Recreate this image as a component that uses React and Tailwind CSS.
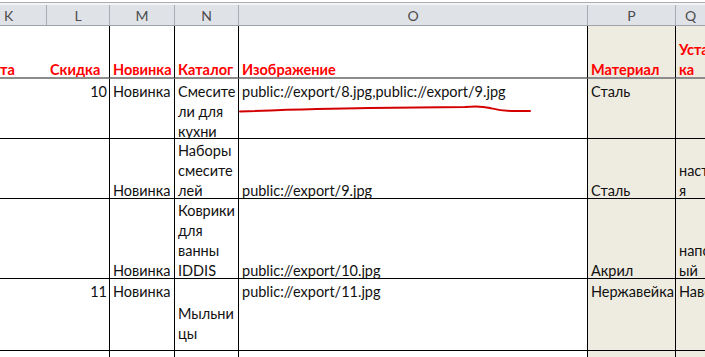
import React from 'react';

const COLS = [
  { key: 'K', w: 47 },
  { key: 'L', w: 63 },
  { key: 'M', w: 65 },
  { key: 'N', w: 64 },
  { key: 'O', w: 349 },
  { key: 'P', w: 88, tan: true },
  { key: 'Q', w: 29, tan: true },
];

// each row: height + cells in column order; a cell is { lines, align, valign }
const ROWS = [
  {
    h: 53,
    head: true,
    cells: [
      { lines: ['та'], valign: 'bottom', flush: true },
      { lines: ['Скидка'], valign: 'bottom' },
      { lines: ['Новинка'], valign: 'bottom' },
      { lines: ['Каталог'], valign: 'bottom' },
      { lines: ['Изображение'], valign: 'bottom' },
      { lines: ['Материал'], valign: 'bottom' },
      { lines: ['Уста', 'ка'], valign: 'bottom' },
    ],
  },
  {
    h: 60,
    cells: [
      null,
      { lines: ['10'], align: 'right' },
      { lines: ['Новинка'] },
      { lines: ['Смесите', 'ли для', 'кухни'] },
      { lines: ['public://export/8.jpg,public://export/9.jpg'], mark: true },
      { lines: ['Сталь'] },
      null,
    ],
  },
  {
    h: 60,
    cells: [
      null,
      null,
      { lines: ['Новинка'], valign: 'bottom' },
      { lines: ['Наборы', 'смесите', 'лей'], valign: 'bottom' },
      { lines: ['public://export/9.jpg'], valign: 'bottom' },
      { lines: ['Сталь'], valign: 'bottom' },
      { lines: ['наст', 'я'], valign: 'bottom' },
    ],
  },
  {
    h: 80,
    cells: [
      null,
      null,
      { lines: ['Новинка'], valign: 'bottom' },
      { lines: ['Коврики', 'для', 'ванны', 'IDDIS'], valign: 'bottom' },
      { lines: ['public://export/10.jpg'], valign: 'bottom' },
      { lines: ['Акрил'], valign: 'bottom' },
      { lines: ['напо', 'ый'], valign: 'bottom' },
    ],
  },
  {
    h: 72,
    cells: [
      null,
      { lines: ['11'], align: 'right' },
      { lines: ['Новинка'] },
      { lines: ['Мыльни', 'цы'], valign: 'middle' },
      { lines: ['public://export/11.jpg'] },
      { lines: ['Нержавейка'] },
      { lines: ['Наве'] },
    ],
  },
  { h: 20, cells: [null, null, null, null, null, null, null] },
];

const VALIGN = {
  top: 'justify-start pt-[3px]',
  bottom: 'justify-end',
  middle: 'justify-start pt-[25px]',
};

// red pen stroke under the first image path
const Scribble = () => (
  <svg
    className="absolute left-0 top-[24px] pointer-events-none"
    width="300"
    height="14"
    viewBox="0 0 300 14"
  >
    <path
      d="M1 8.5 C 40 7, 80 5.5, 130 5 S 205 4.5, 226 4 C 236 3, 243 3, 251 5 S 262 8, 276 8 L 291 8"
      fill="none"
      stroke="#d40000"
      strokeWidth="2"
      strokeLinecap="round"
    />
  </svg>
);

const Cell = ({ col, row, cell, last }) => {
  const bg = col.tan ? 'bg-[#eeece1]' : 'bg-white';
  const border = row.head ? 'border-b-2 border-b-[#8c8c8c]' : 'border-b border-b-black';
  const vline = col.key === 'K' || last ? '' : 'border-r border-r-black';
  const drop = cell && cell.valign === 'bottom' ? 'relative top-[3px]' : '';
  const pad = cell && cell.flush ? 'pl-0' : 'pl-[3px] pr-[2px]';
  return (
    <div
      className={`relative shrink-0 overflow-hidden flex flex-col ${bg} ${border} ${vline} ${
        cell ? VALIGN[cell.valign || 'top'] : ''
      } ${pad}`}
      style={{ width: col.w }}
    >
      {cell &&
        cell.lines.map((t, i) => (
          <div
            key={i}
            className={`leading-[20px] whitespace-nowrap ${drop} ${
              cell.align === 'right' ? 'text-right' : ''
            } ${row.head ? 'text-[#ff0000] font-bold' : 'text-[#111]'}`}
          >
            {t}
          </div>
        ))}
      {cell && cell.mark && <Scribble />}
    </div>
  );
};

export default function App() {
  return (
    <div
      className="w-[705px] h-[357px] overflow-hidden bg-white text-[14.5px]"
      style={{ fontFamily: 'Lato, "Open Sans", sans-serif' }}
    >
      {/* top frame lines */}
      <div className="h-[2px] bg-white" />
      <div className="h-px bg-[#a9adb3]" />
      <div className="h-[2px] bg-[#f3f4f6]" />

      {/* column letters */}
      <div className="flex h-[21px] bg-[#dfe3e8] border-b border-b-[#9ea3a9]">
        {COLS.map((c, i) => (
          <div
            key={c.key}
            className={`shrink-0 flex items-center text-[14px] text-[#4d4d4d] ${
              i === 0 ? 'justify-start pl-[4px]' : 'justify-center'
            } ${i < COLS.length - 1 ? 'border-r border-r-[#a8adb3]' : ''}`}
            style={{ width: c.w }}
          >
            {c.key}
          </div>
        ))}
      </div>

      {/* sheet rows */}
      {ROWS.map((row, r) => (
        <div key={r} className="flex" style={{ height: row.h }}>
          {COLS.map((c, i) => (
            <Cell key={c.key} col={c} row={row} cell={row.cells[i]} last={i === COLS.length - 1} />
          ))}
        </div>
      ))}
    </div>
  );
}
